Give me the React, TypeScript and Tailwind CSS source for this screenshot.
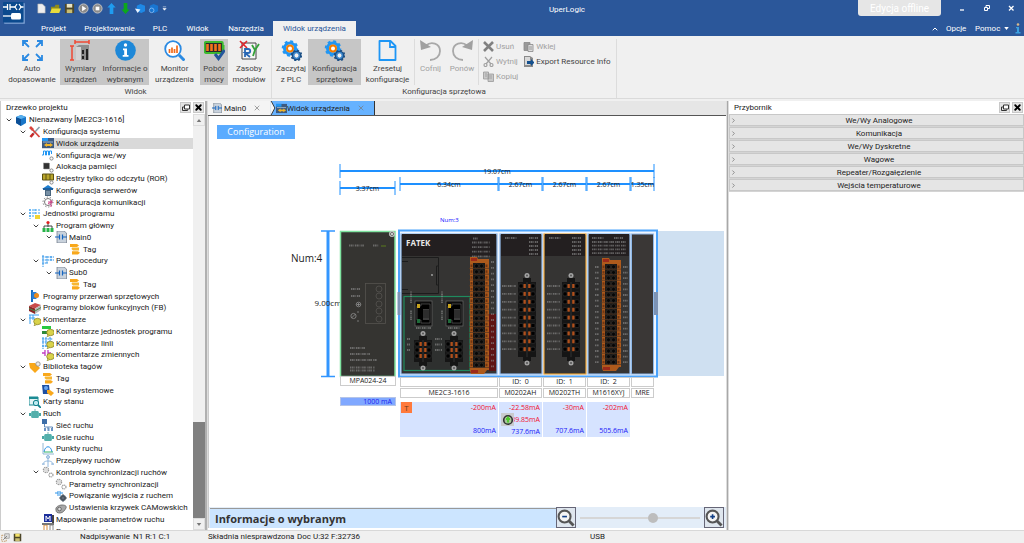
import type { ReactNode } from "react";
import { ChevronDown, ChevronRight, ChevronUp, X } from "lucide-react";
import clsx from "clsx";

type IconName =
  | "cube" | "tools" | "device" | "io" | "memory" | "ror" | "server" | "comm" | "units" | "program"
  | "ladder" | "tag" | "sub" | "interrupt" | "fb" | "comments" | "unitComment" | "lineComment"
  | "varComment" | "library" | "sysTag" | "chart" | "motor" | "network" | "points" | "flow"
  | "gears" | "link" | "cam" | "mapping" | "params";

type TreeNode = { label: string; icon: IconName; level: 0 | 1 | 2 | 3 | 4; open?: boolean; selected?: boolean };

const TREE: TreeNode[] = [
  { label: "Nienazwany [ME2C3-1616]", icon: "cube", level: 0, open: true },
  { label: "Konfiguracja systemu", icon: "tools", level: 1, open: true },
  { label: "Widok urządzenia", icon: "device", level: 2, selected: true },
  { label: "Konfiguracja we/wy", icon: "io", level: 2 },
  { label: "Alokacja pamięci", icon: "memory", level: 2 },
  { label: "Rejestry tylko do odczytu (ROR)", icon: "ror", level: 2 },
  { label: "Konfiguracja serwerów", icon: "server", level: 2 },
  { label: "Konfiguracja komunikacji", icon: "comm", level: 2 },
  { label: "Jednostki programu", icon: "units", level: 1, open: true },
  { label: "Program główny", icon: "program", level: 2, open: true },
  { label: "Main0", icon: "ladder", level: 3, open: true },
  { label: "Tag", icon: "tag", level: 4 },
  { label: "Pod-procedury", icon: "sub", level: 2, open: true },
  { label: "Sub0", icon: "ladder", level: 3, open: true },
  { label: "Tag", icon: "tag", level: 4 },
  { label: "Programy przerwań sprzętowych", icon: "interrupt", level: 1 },
  { label: "Programy bloków funkcyjnych (FB)", icon: "fb", level: 1 },
  { label: "Komentarze", icon: "comments", level: 1, open: true },
  { label: "Komentarze jednostek programu", icon: "unitComment", level: 2 },
  { label: "Komentarze linii", icon: "lineComment", level: 2 },
  { label: "Komentarze zmiennych", icon: "varComment", level: 2 },
  { label: "Biblioteka tagów", icon: "library", level: 1, open: true },
  { label: "Tag", icon: "tag", level: 2 },
  { label: "Tagi systemowe", icon: "sysTag", level: 2 },
  { label: "Karty stanu", icon: "chart", level: 1 },
  { label: "Ruch", icon: "motor", level: 1, open: true },
  { label: "Sieć ruchu", icon: "network", level: 2 },
  { label: "Osie ruchu", icon: "motor", level: 2 },
  { label: "Punkty ruchu", icon: "points", level: 2 },
  { label: "Przepływy ruchów", icon: "flow", level: 2 },
  { label: "Kontrola synchronizacji ruchów", icon: "gears", level: 2, open: true },
  { label: "Parametry synchronizacji", icon: "gears", level: 3 },
  { label: "Powiązanie wyjścia z ruchem", icon: "link", level: 3 },
  { label: "Ustawienia krzywek CAMowskich", icon: "cam", level: 3 },
  { label: "Mapowanie parametrów ruchu", icon: "mapping", level: 2 },
  { label: "Parametry ruchu", icon: "params", level: 2 },
];

const INDENT = ["pl-[4px]", "pl-[18px]", "pl-[31px]", "pl-[44px]", "pl-[58px]"];

const BUBBLE = (
  <>
    <ellipse cx="8.5" cy="7.5" rx="3.8" ry="3.2" fill="#d9d24a" stroke="#7f7a22" strokeWidth="0.7" />
    <path d="M6 9.5 5 12l3-1.5" fill="#d9d24a" stroke="#7f7a22" strokeWidth="0.5" />
  </>
);

const SMALL_GEAR = <circle cx="9.5" cy="9.5" r="1.6" fill="#fff" stroke="#888" />;

const TREE_ICONS: Record<IconName, ReactNode> = {
  cube: (
    <>
      <path d="M1 3l5-2 5 2v6l-5 3-5-3z" fill="#1976c8" />
      <path d="M1 3l5 2v7L1 9z" fill="#0c4f96" />
      <path d="M1 3l5-2 5 2-5 2z" fill="#58b0ee" />
    </>
  ),
  tools: (
    <>
      <path d="M10.5 1 4 8" stroke="#8aa0ae" strokeWidth="1.6" />
      <path d="M4.5 7.5 1.5 11" stroke="#c62828" strokeWidth="2.6" />
      <path d="M2 2l8.5 9" stroke="#d8453e" strokeWidth="1.8" />
      <path d="M1 1l3 3" stroke="#d8453e" strokeWidth="2.6" />
    </>
  ),
  device: (
    <>
      <path d="M0 1h12v10H0z" fill="#3d5a80" />
      <path d="M0 1h6v3H0z" fill="#2196f3" />
      <path d="M2 8l3-2v1h3V6l3 2-3 2V9H5v1z" fill="#f0b429" />
      <path d="M1 5h10" stroke="#9db4cc" />
    </>
  ),
  io: (
    <>
      <path d="M0 6h1.5V2h2v4h1V2h2v4h1V2h2v3" fill="none" stroke="#2196f3" />
      {SMALL_GEAR}
    </>
  ),
  memory: (
    <>
      <path d="M1.500 2h6v6h-6z" fill="#333" stroke="#999" strokeDasharray="1 1" />
      {SMALL_GEAR}
    </>
  ),
  ror: (
    <>
      <path d="M0.500 1h11v6h-11z" fill="#b9a62c" stroke="#5c5213" />
      <path d="M4 1v6M8 1v6" stroke="#5c5213" />
      {SMALL_GEAR}
    </>
  ),
  server: (
    <>
      <path d="M0 5 6 1l6 4z" fill="#1d7fd1" />
      <path d="M1 4h10v2H1z" fill="#1e5f9c" />
      <path d="M3 6h6v6H3z" fill="#49657d" />
      <path d="M4 8h4M4 10h4" stroke="#cfe0ee" strokeWidth="0.7" />
    </>
  ),
  comm: (
    <>
      <circle cx="6" cy="6" r="3.5" fill="none" stroke="#777" />
      <circle cx="6" cy="6" r="5" fill="none" stroke="#777" strokeDasharray="1.300 1.800" />
      <path d="M6 6h5M9 4v7M6 8l3-2" stroke="#d13c86" />
    </>
  ),
  units: (
    <>
      <path d="M0 2h12M0 5h12M0 8h6M1 1v10M6 1v6" stroke="#3ba0ef" strokeDasharray="2 1" />
      <path d="M6 7h5v4H6z" fill="#f2d433" />
    </>
  ),
  program: (
    <>
      <path d="M6 2v5M2 10V6h8v4" fill="none" stroke="#444" />
      <circle cx="6" cy="2.500" r="1.600" fill="#e02020" />
      <path d="M0.500 8h3v4h-3zM4.500 8h3v4h-3zM8.500 8h3v4h-3z" fill="#29b34a" />
    </>
  ),
  ladder: (
    <>
      <path d="M2 0h7l2.500 2v10H2z" fill="#c9d2dc" stroke="#6b7785" strokeWidth="0.7" />
      <path d="M0 6h4M8 6h4M4.500 3.500v5M7.500 3.500v5" stroke="#1565c0" strokeWidth="1.200" />
    </>
  ),
  tag: (
    <>
      <path d="M1 1h7l2 1.500L8 4H1z" fill="#f9a81b" />
      <path d="M3 4.500h7v3H4L2.500 6z" fill="#f7b733" />
      <path d="M3 8.200h6l2 1.500-2 1.800H3z" fill="#f9a81b" />
    </>
  ),
  sub: (
    <path d="M0 2h12M0 5h12M0 8h6M1 0v12M5 1v8M9 1v5" stroke="#2c93e8" strokeDasharray="2 0.700" />
  ),
  interrupt: (
    <>
      <path d="M3 0v12" stroke="#1b6ec2" strokeWidth="2" />
      <path d="M3 2h4l3 3.500L7 9H3z" fill="#2d7fd3" />
      <circle cx="7.500" cy="5.500" r="2.500" fill="#f08c1a" />
    </>
  ),
  fb: (
    <>
      <path d="M0 4l6-3 6 2-6 3.500z" fill="#c94b4b" />
      <path d="M0 4v5l6 3V6.500z" fill="#8c2626" />
      <path d="M6 6.500 12 3v5l-6 4z" fill="#b8b8b8" />
      <path d="M0 6.500 6 9l6-3.500" fill="none" stroke="#4b8a4b" />
    </>
  ),
  comments: (
    <>
      <path d="M0 1h10M0 4h6M1 1v9M4 1v5" stroke="#3ba0ef" />
      {BUBBLE}
    </>
  ),
  unitComment: (
    <>
      <path d="M0 1h9v3H0z" fill="#27c93f" />
      <path d="M0 6h6v3H0z" fill="#2d8a3a" />
      {BUBBLE}
    </>
  ),
  lineComment: (
    <>
      <path d="M0 2h11M0 5h11M0 9h5M1 0v12M4 0v10M8 0v4" stroke="#2c93e8" strokeDasharray="2 0.700" />
      {BUBBLE}
    </>
  ),
  varComment: (
    <>
      <path d="M0 4h3M6 4h3M3 1v6M6 1v6" stroke="#c13cc1" strokeWidth="1.300" />
      {BUBBLE}
    </>
  ),
  library: (
    <>
      <path d="M0 2h6l5 5-5 5-5-5z" fill="#f9a81b" />
      <circle cx="9" cy="3" r="2.200" fill="#ececec" stroke="#888" strokeWidth="0.8" />
    </>
  ),
  sysTag: (
    <>
      <path d="M0 1h7l1 9H1z" fill="#1e4fa3" />
      <circle cx="4" cy="4" r="2" fill="#6aa6f0" />
      <path d="M5 6h3l4 3-3 3-4-3z" fill="#f9a81b" />
    </>
  ),
  chart: (
    <>
      <path d="M0 1h9v8H0z" fill="#e4f4f4" stroke="#1b8b94" />
      <path d="M0 1h9v2H0z" fill="#1b8b94" />
      <circle cx="7" cy="7" r="2.700" fill="#bdeaf0" stroke="#12828c" />
      <path d="M9 9l3 3" stroke="#12828c" strokeWidth="1.800" />
    </>
  ),
  motor: (
    <>
      <path d="M0 5h2v3H0zM10 5h2v3h-2z" fill="#4aa5a3" />
      <rect x="2" y="3" width="8" height="7" rx="1.500" fill="#62bdb9" />
      <path d="M4 3v7M6 1v9M8 3v7" stroke="#3c9693" strokeWidth="0.7" />
    </>
  ),
  network: (
    <>
      <path d="M0 0h5v5H0z" fill="#3d6ea8" />
      <path d="M2.500 5v3h8V10M6 8v2" fill="none" stroke="#3d6ea8" strokeWidth="0.8" />
      <path d="M2 9h2v3H2zM5.500 9h2v3h-2zM9 9h2v3H9z" fill="#6b94c4" />
    </>
  ),
  points: (
    <>
      <path d="M1 0v11h11" fill="none" stroke="#79a6c9" strokeWidth="0.8" />
      <path d="M2 9c1-7 7-7 8 0" fill="none" stroke="#2c93e8" />
      <path d="M2 9h9" stroke="#34b36a" />
    </>
  ),
  flow: (
    <>
      <path d="M6 1v5M6 6C2 6 1 8 1 10M6 6c4 0 5 2 5 4M6 6v6" fill="none" stroke="#8fb6dd" />
      <circle cx="6" cy="2" r="1.500" fill="#c2d9f0" stroke="#8fb6dd" />
      <path d="M0 9h3M9 9h3" stroke="#8fb6dd" />
    </>
  ),
  gears: (
    <>
      <circle cx="4" cy="4" r="2.600" fill="none" stroke="#999" strokeWidth="1.300" strokeDasharray="1.400 0.600" />
      <circle cx="4" cy="4" r="1.300" fill="none" stroke="#aaa" strokeWidth="0.600" />
      <circle cx="9" cy="9" r="2" fill="none" stroke="#999" strokeWidth="1.200" strokeDasharray="1.200 0.500" />
    </>
  ),
  link: (
    <>
      <path d="M0 3h3M5 3h3M3 1v5M5 1v5" stroke="#2c93e8" />
      <circle cx="8" cy="8" r="3" fill="#4a5560" />
      <circle cx="8" cy="8" r="1" fill="#c8d0d8" />
      <path d="M8 4v8M4 8h8" stroke="#4a5560" />
    </>
  ),
  cam: (
    <>
      <path d="M1 8c-1-3 3-5 6-5s5 1 4 3-3 5-6 5-4-1-4-3z" fill="#a8a8a8" stroke="#666" strokeWidth="0.800" />
      <circle cx="4.500" cy="7" r="1.800" fill="#ddd" stroke="#555" strokeWidth="0.800" />
    </>
  ),
  mapping: (
    <>
      <path d="M2 1h8v8H2z" fill="#1c2f9c" />
      <path d="M4 8V3l2 3 2-3v5" fill="none" stroke="#fff" />
      <path d="M0 10h12v2H0z" fill="#777" />
      <path d="M10 2h2v8h-2z" fill="#444" />
    </>
  ),
  params: (
    <>
      <path d="M2 0h3v12H2z" fill="none" stroke="#d98b3a" />
      <path d="M8 0h3v12H8z" fill="none" stroke="#888" />
    </>
  ),
};

function TreeRow({ node }: { node: TreeNode }) {
  return (
    <li className={clsx("flex min-h-0 flex-1 items-center", INDENT[node.level])}>
      <span className="flex w-[10px] shrink-0 items-center">
        {node.open && <ChevronDown size={8} strokeWidth={3} className="text-[#444]" />}
      </span>
      <button
        type="button"
        className={clsx("flex h-full min-w-0 items-center gap-[2px] whitespace-nowrap text-left", node.selected && "flex-1 bg-[#d9d9d9]")}
      >
        <svg viewBox="0 0 12 12" className="size-[12px] shrink-0">
          {TREE_ICONS[node.icon]}
        </svg>
        {node.label}
      </button>
    </li>
  );
}

function PanelTitle({ title }: { title: string }) {
  return (
    <div className="flex h-[13px] shrink-0 items-center gap-[2px] bg-white pl-[5px] pr-[1px]">
      <h2 className="flex-1">{title}</h2>
      <button type="button" aria-label={`Odepnij: ${title}`} className="flex size-[11px] items-center justify-center border border-[#c8c8c8] bg-[#e4e4e4]">
        <svg viewBox="0 0 8 8" className="size-[8px]">
          <path d="M2.500 1h5v4h-5z" fill="#fff" stroke="#333" />
          <path d="M2 3H.500v3.500h5V5.500" fill="none" stroke="#333" />
        </svg>
      </button>
      <button type="button" aria-label={`Zamknij: ${title}`} className="flex size-[11px] items-center justify-center border border-[#c8c8c8] bg-[#e4e4e4] text-black">
        <X size={11} strokeWidth={5} />
      </button>
    </div>
  );
}

/* ---------- ribbon ---------- */

const GEARS = (
  <>
    <circle cx="9" cy="8.500" r="5.500" fill="none" stroke="#2196f3" strokeWidth="3" />
    <circle cx="9" cy="8.500" r="7.300" fill="none" stroke="#2196f3" strokeWidth="2" strokeDasharray="2.900 2.830" />
    <circle cx="9" cy="8.500" r="3" fill="#fff" stroke="#f57c00" strokeWidth="2" />
    <circle cx="15.500" cy="15.500" r="3.600" fill="#f0f0f0" stroke="#1b4f86" strokeWidth="2.400" />
    <circle cx="15.500" cy="15.500" r="5" fill="none" stroke="#1b4f86" strokeWidth="1.600" strokeDasharray="2 1.930" />
    <circle cx="15.500" cy="15.500" r="2.800" fill="none" stroke="#3f8fd6" strokeWidth="1.200" />
  </>
);

const RIBBON_ICONS = {
  fit: (
    <g stroke="#2b8ae2" strokeWidth="1.800" fill="none">
      <path d="M1 6V1h5M1 1l6 6M15 1h5v5M20 1l-6 6M1 15v5h5M1 20l6-6M20 15v5h-5M20 20l-6-6" />
    </g>
  ),
  dims: (
    <>
      <path d="M5 2h14M5 0v4M19 0v4M2 6v14M0 6h4M0 20h4" stroke="#f04a34" strokeWidth="1.500" />
      <path d="M6 7l3-2h10v15H6z" fill="#8d8d8d" />
      <path d="M6 7h5v13H6z" fill="#d4d4d4" />
      <path d="M12 10h2v4h-2zM12 16h2v3h-2zM16 9h2v11h-2z" fill="#222" />
    </>
  ),
  info: (
    <>
      <circle cx="10.500" cy="10.500" r="10.300" fill="#1e88d8" />
      <circle cx="10.500" cy="5" r="1.700" fill="#fff" />
      <path d="M8 8.500h4V15h1.500v1.700H7.700V15h1.500v-4.800H8z" fill="#fff" />
    </>
  ),
  monitor: (
    <>
      <circle cx="9" cy="9" r="7.800" fill="#fff" stroke="#2b8ae2" strokeWidth="1.800" />
      <path d="M15 15l5.500 5.500" stroke="#2b8ae2" strokeWidth="3" />
      <path d="M5.500 13V9M8 13V7.500M10.500 13V9M13 13V5.500" stroke="#f26a1b" strokeWidth="1.700" />
    </>
  ),
  power: (
    <>
      <rect x="0.800" y="2" width="18" height="11" rx="1" fill="#2a2a2a" stroke="#3dbb2f" strokeWidth="1.800" />
      <path d="M19.500 5v5" stroke="#3dbb2f" strokeWidth="2" />
      <path d="M3.500 4v7M7.500 4v7M11.500 4v7M15.500 4v7" stroke="#f5741b" strokeWidth="2.600" />
      <path d="M11 14l3.500 4.500L20.500 10" fill="none" stroke="#23569c" strokeWidth="3" />
    </>
  ),
  resources: (
    <>
      <path d="M3 3h14v16H3z" fill="#f6f6f6" stroke="#444" />
      <path d="M1 1l7 7M8 1 1 8" stroke="#e0252b" strokeWidth="1.600" />
      <path d="M6 17V9h3c3 0 3 4 0 4H6l5 4" fill="none" stroke="#2867b3" strokeWidth="1.800" />
      <path d="M13 5l3 5 4-6M16 10l-2 6" fill="none" stroke="#35a13a" strokeWidth="1.800" />
    </>
  ),
  gears: GEARS,
  reset: (
    <>
      <path d="M2.500 1h11l5 5v14h-16z" fill="none" stroke="#1e96f5" strokeWidth="1.800" strokeLinejoin="round" />
      <path d="M13 1v6h6" fill="none" stroke="#1e96f5" strokeWidth="1.800" />
    </>
  ),
  undo: (
    <>
      <path d="M6 5.500C11 1 20 3 20 11c0 5-4 9-10 9" fill="none" stroke="#a8a8a8" strokeWidth="1.800" />
      <path d="M0 0l1 10 10-3z" fill="#a0a0a0" />
    </>
  ),
  redo: (
    <>
      <path d="M15 5.500C10 1 1 3 1 11c0 5 4 9 10 9" fill="none" stroke="#a8a8a8" strokeWidth="1.800" />
      <path d="M21 0l-1 10-10-3z" fill="#a0a0a0" />
    </>
  ),
};

type RibbonButtonProps = {
  icon: keyof typeof RIBBON_ICONS;
  lines: string[];
  width: string;
  active?: boolean;
  disabled?: boolean;
};

function RibbonButton({ icon, lines, width, active, disabled }: RibbonButtonProps) {
  return (
    <button
      type="button"
      disabled={disabled}
      className={clsx(
        "flex h-[46px] shrink-0 flex-col items-center whitespace-nowrap pt-px leading-[11px]",
        width,
        active && "bg-[#c6c6c6]",
        disabled ? "text-[#a0a0a0]" : "text-[#444]"
      )}
    >
      <svg viewBox="0 0 21 21" className="mb-[2px] size-[21px] shrink-0">
        {RIBBON_ICONS[icon]}
      </svg>
      {lines.map((line) => (
        <span key={line} className="block">{line}</span>
      ))}
    </button>
  );
}

const EDIT_ICONS = {
  remove: <path d="M1 1l9 9M10 1l-9 9" stroke="#808080" strokeWidth="2.600" />,
  cut: (
    <g fill="none" stroke="#a0a0a0" strokeWidth="1.200">
      <path d="M2 1l6 7M9 1 3 8" />
      <circle cx="2.500" cy="9" r="1.500" />
      <circle cx="8.500" cy="9" r="1.500" />
    </g>
  ),
  copy: (
    <g fill="#c8c8c8" stroke="#999" strokeWidth="0.800">
      <path d="M0.500 1h5v7h-5zM5 3h5.500v7.500H5z" />
      <path d="M6 5h3M6 7h3M2 3h2M2 5h2" />
    </g>
  ),
  paste: (
    <g stroke="#888" strokeWidth="0.800">
      <path d="M1 1.500h6v8H1z" fill="#999" />
      <path d="M5 3.500h5v7H5z" fill="#ddd" />
      <path d="M6 6h3M6 8h3" />
    </g>
  ),
  export: (
    <>
      <path d="M1 0h6l3 2v9H1z" fill="#8a8a8a" />
      <path d="M2 1h5v8H2z" fill="#d8d8d8" />
      <path d="M4 5h4V3l3.500 3.500L8 10V8H4z" fill="#14508e" />
    </>
  ),
};

function EditButton({ icon, label, enabled }: { icon: keyof typeof EDIT_ICONS; label: string; enabled?: boolean }) {
  return (
    <button
      type="button"
      disabled={!enabled}
      className={clsx("flex h-[15px] items-center gap-[2px] whitespace-nowrap", enabled ? "text-[#444]" : "text-[#a0a0a0]")}
    >
      <svg viewBox="0 0 11 11" className="size-[11px] shrink-0">{EDIT_ICONS[icon]}</svg>
      {label}
    </button>
  );
}

function Divider() {
  return <span className="h-[46px] w-px shrink-0 bg-[#dcdcdc]" />;
}

function Ribbon() {
  return (
    <div className="flex h-[63px] shrink-0 border-b border-[#dadada] bg-[#f0f0f0] pt-[3px] text-[#444]">
      <section className="flex w-[272px] shrink-0 flex-col border-r border-[#dcdcdc]">
        <div className="flex pl-[4px]">
          <RibbonButton icon="fit" lines={["Auto", "dopasowanie"]} width="w-[56px]" />
          <RibbonButton icon="dims" lines={["Wymiary", "urządzeń"]} width="w-[41px]" active />
          <RibbonButton icon="info" lines={["Informacje o", "wybranym"]} width="w-[48px]" active />
          <RibbonButton icon="monitor" lines={["Monitor", "urządzenia"]} width="w-[51px]" />
          <RibbonButton icon="power" lines={["Pobór", "mocy"]} width="w-[28px]" active />
          <RibbonButton icon="resources" lines={["Zasoby", "modułów"]} width="w-[42px]" />
        </div>
        <h2 className="text-center leading-[13px]">Widok</h2>
      </section>
      <section className="flex w-[345px] shrink-0 flex-col border-r border-[#dcdcdc]">
        <div className="flex pl-[2px]">
          <RibbonButton icon="gears" lines={["Zaczytaj", "z PLC"]} width="w-[34px]" />
          <RibbonButton icon="gears" lines={["Konfiguracja", "sprzętowa"]} width="w-[53px]" active />
          <RibbonButton icon="reset" lines={["Zresetuj", "konfiguracje"]} width="w-[53px]" />
          <Divider />
          <RibbonButton icon="undo" lines={["Cofnij"]} width="w-[31px]" disabled />
          <RibbonButton icon="redo" lines={["Ponów"]} width="w-[32px]" disabled />
          <Divider />
          <div className="flex gap-[5px] pl-[4px]">
            <div className="flex flex-col">
              <EditButton icon="remove" label="Usuń" />
              <EditButton icon="cut" label="Wytnij" />
              <EditButton icon="copy" label="Kopiuj" />
            </div>
            <div className="flex flex-col">
              <EditButton icon="paste" label="Wklej" />
              <EditButton icon="export" label="Export Resource Info" enabled />
            </div>
          </div>
        </div>
        <h2 className="text-center leading-[13px]">Konfiguracja sprzętowa</h2>
      </section>
    </div>
  );
}

/* ---------- header ---------- */

const QUICK_ACTIONS: { label: string; icon: ReactNode }[] = [
  { label: "Nowy", icon: <path d="M2 1h5l3 3v7H2z" fill="#eee" stroke="#aaa" strokeWidth="0.600" /> },
  {
    label: "Otwórz",
    icon: (
      <>
        <path d="M1 4h4l1-2h4v8H1z" fill="#8f8b1a" />
        <path d="M0 11l2-5h10l-2 5z" fill="#e8dc3c" />
      </>
    ),
  },
  {
    label: "Zapisz",
    icon: (
      <>
        <path d="M1 1h10v10H1z" fill="#4c4628" />
        <path d="M3 1h6v4H3z" fill="#e9e4c4" />
        <path d="M3 7h6v4H3z" fill="#c8bd72" />
      </>
    ),
  },
  {
    label: "Uruchom",
    icon: (
      <>
        <circle cx="6" cy="6" r="5" fill="#8b8b8b" stroke="#c8c8c8" />
        <path d="M4.500 3l4.500 3-4.500 3z" fill="#fff" />
      </>
    ),
  },
  {
    label: "Zatrzymaj",
    icon: (
      <>
        <circle cx="6" cy="6" r="5" fill="#8b8b8b" stroke="#c8c8c8" />
        <path d="M4 4h4v4H4z" fill="#fff" />
      </>
    ),
  },
  { label: "Wyślij", icon: <path d="M6 0l4.500 5H8v7H4V5H1.500z" fill="#1f9cf0" /> },
  { label: "Pobierz", icon: <path d="M6 12 1.500 7H4V0h4v7h2.500z" fill="#0ca81c" /> },
  {
    label: "Porównaj",
    icon: (
      <>
        <path d="M3 3l4-2 5 2v6l-4 2-5-2z" fill="#1e88e5" />
        <path d="M1 6l3 5 3-4z" fill="#e8f2ff" />
      </>
    ),
  },
  {
    label: "Symulacja",
    icon: (
      <>
        <path d="M2 3l4-2 5 2v6l-4 2-5-2z" fill="#1976d2" />
        <circle cx="4" cy="8" r="2.500" fill="none" stroke="#7db8f5" />
      </>
    ),
  },
];

const MENU = [
  { label: "Projekt", width: "w-[43px]" },
  { label: "Projektowanie", width: "w-[69px]" },
  { label: "PLC", width: "w-[32px]" },
  { label: "Widok", width: "w-[43px]" },
  { label: "Narzędzia", width: "w-[54px]" },
];

function Header() {
  return (
    <header className="relative flex h-[36px] shrink-0 bg-[#2b579a] text-white">
      <div className="w-[32px] shrink-0 pl-[3px] pt-[2px]">
        <svg viewBox="0 0 22 22" className="size-[22px]">
          <rect x="1" y="1" width="21" height="21" rx="1" fill="#6d93c8" />
          <rect width="20.500" height="20.500" rx="1" fill="#0b4a8e" />
          <path d="M0 5h4M7.500 5h5M17 5h3.500M4.500 2v6M7 2v6" stroke="#fff" strokeWidth="1.300" />
          <path d="M14 2l-2 3 2 3M16 2l2 3-2 3" fill="none" stroke="#fff" strokeWidth="1.200" />
          <path d="M0 14h8" stroke="#fff" strokeWidth="1.300" />
          <rect x="8" y="11" width="10" height="6.500" rx="1.500" fill="#fff" />
        </svg>
      </div>
      <div className="flex min-w-0 flex-1 flex-col">
        <div className="flex h-[21px] items-start">
          <div className="flex gap-[3px] pl-[4px] pt-[3px]">
            {QUICK_ACTIONS.map(({ label, icon }) => (
              <button key={label} type="button" aria-label={label} className="flex w-[11px] justify-center">
                <svg viewBox="0 0 12 12" className="size-[11px]">{icon}</svg>
              </button>
            ))}
            <button type="button" aria-label="Więcej" className="flex w-[8px] items-center">
              <svg viewBox="0 0 6 6" className="size-[5px]"><path d="M1 1h4M1 3h4L3 5z" fill="#fff" stroke="#fff" strokeWidth="0.600" /></svg>
            </button>
          </div>
          <h1 className="min-w-0 flex-1 pl-[106px] text-center leading-[20px]">UperLogic</h1>
          <span className="mr-[8px] h-[16px] w-[83px] shrink-0 rounded-b-[3px] bg-[#e6e6e6] text-center text-[10px] leading-[17px] text-white">Edycja offline</span>
          <div className="flex h-[16px] shrink-0 items-center pr-[2px]">
            <button type="button" aria-label="Minimalizuj" className="flex w-[25px] justify-center">
              <svg viewBox="0 0 8 8" className="size-[8px]"><path d="M2 6h4" stroke="#fff" strokeWidth="1.300" /></svg>
            </button>
            <button type="button" aria-label="Przywróć" className="flex w-[25px] justify-center">
              <svg viewBox="0 0 8 8" className="size-[8px]">
                <path d="M1.500 3.500h3v3h-3zM3 3V1.500h3.500v3H5" fill="none" stroke="#fff" />
              </svg>
            </button>
            <button type="button" aria-label="Zamknij" className="flex w-[23px] justify-center">
              <svg viewBox="0 0 8 8" className="size-[8px]"><path d="M2 2l4.500 4.500M6.500 2 2 6.500" stroke="#fff" strokeWidth="1.300" /></svg>
            </button>
          </div>
        </div>
        <nav className="flex h-[15px] items-stretch leading-[15px]">
          {MENU.map(({ label, width }) => (
            <button key={label} type="button" className={clsx("shrink-0 text-center", width)}>{label}</button>
          ))}
          <button type="button" className="w-[83px] shrink-0 bg-[#f0f0f0] text-center text-[#2b579a]">Widok urządzenia</button>
          <span className="flex-1" />
          <button type="button" aria-label="Zwiń wstążkę" className="flex w-[15px] items-center"><ChevronUp size={8} strokeWidth={3} /></button>
          <button type="button" className="w-[29px] text-left">Opcje</button>
          <button type="button" className="flex w-[36px] items-center justify-between pr-[2px]">
            Pomoc
            <svg viewBox="0 0 6 4" className="h-[3px] w-[5px]"><path d="M0 0h6L3 4z" fill="#fff" /></svg>
          </button>
          <button type="button" aria-label="Informacje" className="flex w-[13px] items-center justify-center">
            <svg viewBox="0 0 6 11" className="h-[11px] w-[6px]">
              <circle cx="3" cy="1.500" r="1.300" fill="#d9b98a" />
              <path d="M1 4h3v5h1.500v1.500h-5V9H2V5.300H1z" fill="#3aa0e0" />
            </svg>
          </button>
        </nav>
      </div>
    </header>
  );
}

/* ---------- device drawing ---------- */

type DimProps = { x1: number; x2: number; y: number; label: string };

function Dimension({ x1, x2, y, label }: DimProps) {
  return (
    <g>
      <path d={`M${x1} ${y}H${x2}`} stroke="#1e90ff" strokeWidth="2" />
      <path d={`M${x1} ${y - 7}V${y + 7}M${x2} ${y - 7}V${y + 7}`} stroke="#1e90ff" />
      <text x={(x1 + x2) / 2} y={y + 3} textAnchor="middle" fontSize="7" fill="#222">{label}</text>
    </g>
  );
}

function TerminalStrip({ x, y, rows, height }: { x: number; y: number; rows: number; height: number }) {
  const pitch = (height - 12) / rows;
  return (
    <g transform={`translate(${x} ${y})`}>
      <path d={`M1 0h7l1 2h11v${height - 6}h-2l-3 4H2l-1-3z`} fill="#ad5a1c" />
      <path d="M2 1h6v3H2z" fill="#9c2a1a" />
      <path d={`M2 ${height - 4}h7v3H2z`} fill="#9c2a1a" />
      <rect x="4" y="6" width="12" height={height - 12} fill="#1c1a18" />
      {Array.from({ length: rows }, (_, i) => (
        <g key={i} transform={`translate(0 ${6 + i * pitch})`}>
          <path d={`M0 ${pitch - 0.5}h20`} stroke="#5a3a22" strokeWidth="0.800" />
          <circle cx="7.500" cy={pitch / 2} r="2" fill="#060606" stroke="#3c3835" strokeWidth="0.500" />
          <circle cx="12.500" cy={pitch / 2} r="2" fill="#060606" stroke="#3c3835" strokeWidth="0.500" />
          <rect x="1.500" y="1.500" width="2" height="2.500" fill="#6e3512" />
          <rect x="16.500" y="1.500" width="2" height="2.500" fill="#6e3512" />
        </g>
      ))}
    </g>
  );
}

function PlugConnector({ cx, y, rows, pitch }: { cx: number; y: number; rows: number; pitch: number }) {
  const body = rows * pitch + 4;
  return (
    <g transform={`translate(${cx} ${y})`}>
      <path d={`M-4 5h8v4h5v${body}h-5v4h-8v-4h-5V9h5z`} fill="#151515" />
      <circle cy="2.500" r="2.500" fill="#a3a3a3" />
      <circle cy="2.500" r="1" fill="#555" />
      <circle cy={body + 15} r="2.500" fill="#a3a3a3" />
      <circle cy={body + 15} r="1" fill="#555" />
      {Array.from({ length: rows }, (_, i) => (
        <g key={i} transform={`translate(0 ${11 + i * pitch})`}>
          <rect x="-8" width="4" height="4" rx="1" fill="#000" stroke="#4a4a4a" strokeWidth="0.400" />
          <rect x="4" width="4" height="4" rx="1" fill="#000" stroke="#4a4a4a" strokeWidth="0.400" />
          <rect x="-3.500" width="2.300" height="4" fill="#b0501c" />
          <rect x="1.200" width="2.300" height="4" fill="#b0501c" />
        </g>
      ))}
      <path d={`M0 9v${body}`} stroke="#3a3a3a" strokeWidth="0.800" />
    </g>
  );
}

/* printed markings, too small to carry letters */
function Marks({ x, y, width, rows, pitch, color = "#8f8f8f" }: { x: number; y: number; width: number; rows: number; pitch: number; color?: string }) {
  return (
    <g stroke={color} strokeWidth="1.800" strokeDasharray="1.200 0.500 1.600 0.400 0.900 1.200" opacity="0.6">
      {Array.from({ length: rows }, (_, i) => (
        <path key={i} d={`M${x} ${y + i * pitch}h${width}`} />
      ))}
    </g>
  );
}

function EthernetPort({ x, y }: { x: number; y: number }) {
  return (
    <g transform={`translate(${x} ${y})`}>
      <rect width="17" height="25" fill="#0c0c0c" stroke="#686868" strokeWidth="0.700" />
      <path d="M2 5h4V3h9v19H6v-3H2z" fill="#000" stroke="#777" strokeWidth="0.500" />
      <path d="M8 8h6v11H8z" fill="#3c3c3c" />
      <path d="M8 10h6M8 12h6M8 14h6M8 16h6" stroke="#111" strokeWidth="0.700" />
      <rect x="2" y="3" width="3" height="4" fill="#c7a31c" />
      <rect x="2" y="18" width="3" height="4" fill="#1f6b3a" />
    </g>
  );
}

function ModuleBody({ x, width, border = "#8fb8e8" }: { x: number; width: number; border?: string }) {
  return (
    <>
      <rect x={x} y="74" width={width} height="140" fill="#353433" stroke={border} strokeWidth="1.200" />
      <rect x={x + 1} y="74" width={width - 2} height="22" fill="#231f20" />
    </>
  );
}

function DeviceDrawing() {
  return (
    <svg viewBox="0 0 444 220" className="absolute left-[71px] top-[44px] h-[220px] w-[444px]">
      <Dimension x1={60} x2={374} y={11} label="19.07cm" />
      <Dimension x1={60} x2={115} y={28} label="3.37cm" />
      <Dimension x1={120} x2={218} y={24} label="6.34cm" />
      <Dimension x1={219} x2={262} y={24} label="2.67cm" />
      <Dimension x1={263} x2={306} y={24} label="2.67cm" />
      <Dimension x1={307} x2={350} y={24} label="2.67cm" />
      <Dimension x1={351} x2={374} y={24} label="1.35cm" />
      <text x="160" y="62" fontSize="6" fill="#1010ff">Num:3</text>
      <text x="11" y="102" fontSize="10" fill="#222">Num:4</text>

      <path d="M48 71v145" stroke="#3396ff" strokeWidth="3" />
      <path d="M41 71h14M41 216.500h14" stroke="#3396ff" strokeWidth="1.500" />
      <text x="48" y="146" textAnchor="middle" fontSize="8" fill="#222">9.00cm</text>

      {/* power supply */}
      <rect x="60.500" y="71.500" width="54.500" height="145" fill="#353431" stroke="#7fe3a0" strokeWidth="1.500" />
      <Marks x={69} y={85.500} width={15} rows={1} pitch={5} />
      <Marks x={93} y={85.500} width={6} rows={1} pitch={5} />
      <path d="M101 86h5" stroke="#5b7a1f" />
      <Marks x={71} y={129} width={9} rows={2} pitch={7} />
      <g fill="none" stroke="#8c8c8c" strokeWidth="0.800">
        <circle cx="78.500" cy="144.500" r="2.300" />
        <path d="M76.500 144.500h4M78.500 143v3" />
        <circle cx="73.500" cy="156" r="2.600" />
        <path d="M71.500 158l4-4M78 151v2M78 160v2" />
      </g>
      <g fill="none" stroke="#55534f" strokeWidth="0.800">
        <rect x="85.500" y="123.500" width="20" height="40" />
        {[129, 136, 144, 151, 159].map((cy) => <circle key={cy} cx="99" cy={cy} r="3" />)}
      </g>
      <Marks x={70} y={188} width={15} rows={1} pitch={6} />
      <Marks x={70} y={194} width={20} rows={1} pitch={6} />
      <Marks x={70} y={200} width={27} rows={1} pitch={6} />
      <Marks x={70} y={207.500} width={25} rows={2} pitch={3} />
      <circle cx="112" cy="74" r="2.700" fill="#777" stroke="#ddd" strokeWidth="0.700" />
      <path d="M110.500 72.500l3 3M113.500 72.500l-3 3" stroke="#eee" strokeWidth="0.700" />

      {/* rack outline and free rail */}
      <rect x="378" y="71" width="66" height="145" fill="#cfe0f1" />
      <rect x="119" y="70.500" width="258" height="146" fill="#eef5ff" stroke="#4ba3fb" strokeWidth="2" />
      <rect x="374" y="132" width="4" height="23" fill="#7c93b5" />
      <rect x="117.500" y="132" width="3" height="23" fill="#7c93b5" />

      {/* controller */}
      <ModuleBody x={121} width={96} />
      <text x="126" y="86" fontSize="8" fontWeight="700" fill="#e8e8e8">FATEK</text>
      <Marks x={193} y={78.500} width={5} rows={1} pitch={5} />
      <Marks x={192} y={82.500} width={18} rows={4} pitch={4.6} />
      <path d="M122 97.500h36.500v36H122M158.500 106h-2v19h2M122 101.500h6M122 129.500h6" fill="none" stroke="#1c1c1c" />
      <circle cx="152" cy="115" r="0.900" fill="#aaa" />
      <rect x="124" y="136.500" width="66" height="74" fill="#2e302f" stroke="#1f8a5e" strokeWidth="1.200" />
      <EthernetPort x={135} y={141} />
      <EthernetPort x={166} y={141} />
      <Marks x={136} y={168} width={15} rows={1} pitch={4} />
      <Marks x={168} y={168} width={12} rows={1} pitch={4} />
      <g transform="rotate(-90 131 158)">
        <Marks x={129} y={158} width={10} rows={1} pitch={4} />
        <Marks x={146} y={158} width={12} rows={1} pitch={4} />
        <Marks x={129} y={189} width={10} rows={1} pitch={4} />
        <Marks x={146} y={189} width={12} rows={1} pitch={4} />
      </g>
      <PlugConnector cx={143} y={171} rows={3} pitch={6} />
      <PlugConnector cx={174} y={171} rows={3} pitch={6} />
      <Marks x={127} y={179} width={3} rows={3} pitch={5.500} />
      <Marks x={155} y={179} width={7} rows={3} pitch={5.500} />
      <TerminalStrip x={189} y={97} rows={18} height={117} />
      <rect x="209" y="154" width="7" height="57" fill="#5e1414" />
      <Marks x={211} y={102} width={3} rows={19} pitch={5.800} />

      {/* analog and temperature modules */}
      <ModuleBody x={220} width={42} />
      <Marks x={225} y={78} width={12} rows={1} pitch={4} />
      <Marks x={249} y={78} width={9} rows={5} pitch={4} />
      <PlugConnector cx={247} y={113} rows={9} pitch={7.900} />
      <Marks x={222} y={126} width={14} rows={9} pitch={7.900} />

      <ModuleBody x={264} width={42} border="#e8a33a" />
      <Marks x={269} y={78} width={12} rows={1} pitch={4} />
      <Marks x={292} y={78} width={9} rows={5} pitch={4} />
      <PlugConnector cx={291} y={113} rows={9} pitch={7.900} />
      <Marks x={267} y={126} width={13} rows={9} pitch={7.900} />

      {/* digital module */}
      <ModuleBody x={308} width={42} />
      <Marks x={312} y={78} width={12} rows={1} pitch={4} />
      <Marks x={334} y={78} width={9} rows={1} pitch={4} />
      <Marks x={312} y={82} width={34} rows={4} pitch={3.700} />
      <TerminalStrip x={321} y={98} rows={18} height={113} />
      <Marks x={315} y={107} width={4} rows={18} pitch={5.600} />
      <Marks x={343} y={107} width={5} rows={18} pitch={5.600} />

      {/* end cover */}
      <rect x="351.500" y="74" width="22" height="140" fill="#3a3736" stroke="#8fb8e8" />
    </svg>
  );
}

const MODULES = [
  { id: "", model: "ME2C3-1616", draw: ["-200mA", "", "800mA"] },
  { id: "ID:  0", model: "M0202AH", draw: ["-22.58mA", "-39.85mA", "737.6mA"] },
  { id: "ID:  1", model: "M0202TH", draw: ["-30mA", "", "707.6mA"] },
  { id: "ID:  2", model: "M1616XYJ", draw: ["-202mA", "", "505.6mA"] },
  { id: "", model: "MRE", draw: null },
];

const MODULE_WIDTHS = ["w-[98px]", "w-[43px]", "w-[43px]", "w-[43px]", "w-[23px]"];

function ModuleLabels() {
  return (
    <div className="absolute left-[191px] top-[261px] flex gap-px text-[7px] text-[#222]">
      {MODULES.map(({ id, model, draw }, i) => (
        <div key={model} className={clsx("flex flex-col gap-px text-center leading-[8px]", MODULE_WIDTHS[i])}>
          <div className="h-[10px] whitespace-pre border border-[#ccc] bg-white">{id}</div>
          <div className="h-[10px] border border-[#ccc] bg-white">{model}</div>
          {draw && (
            <div className="relative mt-[3px] flex h-[35px] flex-col bg-[#d6e3ff] pr-[2px] text-right leading-[12px]">
              {i === 0 && (
                <span className="absolute left-px top-0 size-[11px] bg-[#ff7a3d] text-center text-[8px] leading-[11px] text-[#6a3a1c]">T</span>
              )}
              <span className="h-[12px] text-[#f01030]">{draw[0]}</span>
              <span className="h-[12px] text-[#f01030]">{draw[1]}</span>
              <span className="text-[#2020f8]">{draw[2]}</span>
            </div>
          )}
        </div>
      ))}
      <svg viewBox="0 0 14 14" className="absolute left-[101px] top-[36px] size-[14px]">
        <rect width="13" height="13" fill="#c8c8c8" opacity="0.900" />
        <circle cx="7" cy="7" r="4.300" fill="#a8c89a" stroke="#333" strokeWidth="1.600" />
        <path d="M7 3.500v6M5 6h4" stroke="#4cc82a" strokeWidth="1.800" />
      </svg>
    </div>
  );
}

function Workspace() {
  return (
    <main className="flex min-w-0 flex-1 flex-col bg-white">
      <div className="flex h-[15px] shrink-0 border-b border-[#555] bg-[#e6e6e6] text-[#222]">
        <button type="button" className="flex w-[62px] items-center gap-[2px] bg-[#f4f4f4] pl-[4px]">
          <svg viewBox="0 0 12 12" className="size-[10px] shrink-0">{TREE_ICONS.ladder}</svg>
          <span className="flex-1 text-left">Main0</span>
          <X size={8} strokeWidth={2} className="mr-[9px] text-[#777]" />
        </button>
        <button type="button" className="flex w-[105px] items-center border-r border-[#333] bg-[#66b2ff]">
          <svg viewBox="0 0 6 15" className="h-full w-[6px] shrink-0">
            <path d="M0 0h1l4 7.500L1 15H0z" fill="#f4f4f4" />
            <path d="M1 0l4 7.500L1 15" fill="none" stroke="#333" />
          </svg>
          <svg viewBox="0 0 12 12" className="size-[11px] shrink-0">{TREE_ICONS.device}</svg>
          <span className="flex-1 text-left">Widok urządzenia</span>
          <X size={8} strokeWidth={2} className="mr-[9px] text-[#777]" />
        </button>
      </div>
      <div className="relative min-h-0 flex-1 overflow-hidden border-l border-[#ccc] pl-[8px] pt-[9px]">
        <button type="button" className="h-[14px] w-[78px] bg-[#5aabff] text-center font-['Open_Sans','Noto_Sans',sans-serif] text-[9px] leading-[14px] text-white">Configuration</button>
        <div className="font-['Open_Sans','Noto_Sans',sans-serif]">
          <DeviceDrawing />
          <div className="absolute left-[131px] top-[260px] w-[56px] text-[7px]">
            <div className="h-[10px] border border-[#ccc] bg-white text-center leading-[8px] text-[#222]">MPA024-24</div>
            <div className="mt-[11px] h-[9px] border border-[#b4c4e8] bg-[#80a8ff] pr-[3px] text-right leading-[7px] text-[#1c1cf0]">1000  mA</div>
          </div>
          <ModuleLabels />
        </div>
      </div>
      <div className="mb-[2px] flex h-[21px] shrink-0 items-stretch border-l border-[#ccc] bg-[#e3edf8] pl-px pr-[2px]">
        <h2 className="mt-px flex-1 border-t border-[#999] bg-[#cce5ff] pl-[5px] font-['Open_Sans','Noto_Sans',sans-serif] text-[11px] font-bold leading-[20px] text-[#333]">Informacje o wybranym</h2>
        <ZoomButton label="Pomniejsz" d="M5 7.500h5" />
        <input type="range" aria-label="Powiększenie" defaultValue={62} className="mx-[4px] w-[120px] appearance-none bg-transparent [&::-webkit-slider-runnable-track]:h-[2px] [&::-webkit-slider-runnable-track]:bg-[#d6d6d6] [&::-webkit-slider-thumb]:-mt-[4px] [&::-webkit-slider-thumb]:size-[10px] [&::-webkit-slider-thumb]:appearance-none [&::-webkit-slider-thumb]:rounded-full [&::-webkit-slider-thumb]:bg-[#bdbdbd]" />
        <ZoomButton label="Powiększ" d="M5 7.500h5M7.500 5v5" />
      </div>
    </main>
  );
}

function ZoomButton({ label, d }: { label: string; d: string }) {
  return (
    <button type="button" aria-label={label} className="flex w-[20px] shrink-0 items-center justify-center border border-[#667] bg-[#dfe6ee]">
      <svg viewBox="0 0 19 19" className="size-[18px]">
        <circle cx="8" cy="8" r="6.300" fill="#f4f4f4" stroke="#555" strokeWidth="2.200" />
        <path d="M12.500 12.500l5 5" stroke="#555" strokeWidth="3" />
        <path d={d} stroke="#123f86" strokeWidth="1.700" transform="translate(.5 .5)" />
      </svg>
    </button>
  );
}

const TOOLBOX = ["We/Wy Analogowe", "Komunikacja", "We/Wy Dyskretne", "Wagowe", "Repeater/Rozgałęzienie", "Wejścia temperaturowe"];

export default function App() {
  return (
    <div className="flex h-screen flex-col overflow-hidden bg-[#f0f0f0] font-['Roboto','Noto_Sans',sans-serif] text-[8px] leading-[11px] text-[#222]">
      <Header />
      <Ribbon />
      <div className="mt-[2px] flex min-h-0 flex-1">
        <aside className="flex w-[205px] shrink-0 flex-col overflow-hidden border-l border-[#ccc] bg-white">
          <PanelTitle title="Drzewko projektu" />
          <div className="flex min-h-0 flex-1 overflow-hidden">
            <ul className="-mb-[7px] flex min-w-0 flex-1 flex-col overflow-hidden">
              {TREE.map((node, i) => <TreeRow key={i} node={node} />)}
            </ul>
            <div className="flex w-[12px] shrink-0 flex-col items-stretch bg-[#f0f0f0]">
              <button type="button" aria-label="W górę" className="flex h-[12px] items-center justify-center border border-[#ddd]">
                <svg viewBox="0 0 6 4" className="h-[3px] w-[6px]"><path d="M0 4h6L3 0z" fill="#777" /></svg>
              </button>
              <span className="flex-1" />
              <span className="h-[23%] bg-[#808080]" />
              <button type="button" aria-label="W dół" className="flex h-[12px] items-center justify-center border border-[#ddd]">
                <svg viewBox="0 0 6 4" className="h-[3px] w-[6px]"><path d="M0 0h6L3 4z" fill="#777" /></svg>
              </button>
            </div>
          </div>
        </aside>
        <span className="w-[3px] shrink-0 border-r border-[#ddd] bg-[#b0b0b0]" />
        <Workspace />
        <span className="w-[3px] shrink-0 border-x border-[#ddd] bg-[#a8a8a8]" />
        <aside className="flex w-[295px] shrink-0 flex-col bg-white">
          <PanelTitle title="Przybornik" />
          <ul className="flex flex-col gap-px bg-[#d4d4d4] pb-px">
            {TOOLBOX.map((label) => (
              <li key={label}>
                <button type="button" className="flex h-[12px] w-full items-center border border-[#c8c8c8] bg-[#e5e5e5]">
                  <ChevronRight size={7} strokeWidth={2} className="text-[#555]" />
                  <span className="flex-1 pr-[2px] text-center">{label}</span>
                </button>
              </li>
            ))}
          </ul>
        </aside>
      </div>
      <footer className="flex h-[13px] shrink-0 items-center border-t border-[#d8d8d8] leading-[12px]">
        <div className="flex w-[80px] gap-[3px] pl-[1px]">
          <svg viewBox="0 0 12 12" className="size-[9px]">
            <path d="M1 3h6v8H1z" fill="none" stroke="#b9874a" strokeDasharray="2 1" />
            <path d="M5 1h6v6H5z" fill="#ddd" stroke="#999" />
            <path d="M3 9l5-5" stroke="#666" />
          </svg>
          <svg viewBox="0 0 12 12" className="size-[9px]">
            <path d="M1 1h10v10H1z" fill="#4c4628" />
            <path d="M3 1h6v4H3z" fill="#f2e16a" />
            <path d="M3 7h6v4H3z" fill="#c8bd72" />
          </svg>
        </div>
        <span className="w-[53px]">Nadpisywanie</span>
        <span className="w-[75px]">N1 R:1 C:1</span>
        <span className="w-[89px] whitespace-nowrap">Składnia niesprawdzona</span>
        <span className="w-[293px]">Doc U:32 F:32736</span>
        <span>USB</span>
      </footer>
    </div>
  );
}
